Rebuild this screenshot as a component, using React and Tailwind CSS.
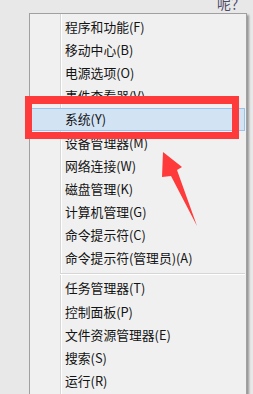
import React from "react";

const groupA = [
  "程序和功能(F)",
  "移动中心(B)",
  "电源选项(O)",
  "事件查看器(V)",
  "系统(Y)",
  "设备管理器(M)",
  "网络连接(W)",
  "磁盘管理(K)",
  "计算机管理(G)",
  "命令提示符(C)",
  "命令提示符(管理员)(A)",
];

const groupB = [
  "任务管理器(T)",
  "控制面板(P)",
  "文件资源管理器(E)",
  "搜索(S)",
  "运行(R)",
];

function Row({ label, active }) {
  return (
    <div
      className={`mx-[1px] h-[23.2px] flex items-center pl-[33px] border ${
        active ? "bg-[#d2e3f4] border-[#98c4ef]" : "border-transparent"
      }`}
    >
      <span className="text-[12.8px] text-[#141414] leading-none">{label}</span>
    </div>
  );
}

export default function App() {
  return (
    <div
      className="relative w-[253px] h-[394px] overflow-hidden bg-[#e8e8e8]"
      style={{ fontFamily: '"Noto Sans CJK SC", "Noto Sans", sans-serif' }}
    >
      <div className="h-[13px] overflow-hidden flex justify-end pr-[8px]">
        <span className="mt-[-6px] text-[14px] leading-[18px] text-[#4d4a66]">呢？</span>
      </div>

      <div className="ml-[29px] w-[218px] border border-[#a0a0a0] bg-[#f0f0f0] shadow-[2px_2px_2px_rgba(0,0,0,0.35)] pt-[1.4px] pb-[4px] bg-[linear-gradient(to_right,transparent_30px,#d6d6d6_30px,#d6d6d6_31px,#ffffff_31px,#ffffff_32px,transparent_32px)]">
        {groupA.map((l, i) => (
          <Row key={l} label={l} active={i === 4} />
        ))}
        <div className="h-[6.8px] flex items-center pl-[30px] pr-[1px]">
          <div className="w-full h-[2px] border-t border-[#d6d6d6] border-b-white border-b" />
        </div>
        {groupB.map((l) => (
          <Row key={l} label={l} />
        ))}
      </div>

      {/* red highlight frame */}
      <div className="absolute left-[25px] top-[96px] w-[214px] h-[43px] border-[7px] border-t-8 border-[#ff3a3a]" />

      {/* red arrow */}
      <svg className="absolute left-0 top-0" width="253" height="394" viewBox="0 0 253 394">
        <polygon
          points="163,152 182,167 177,170 197,226 171,176 162,177"
          fill="#ff3a3a"
        />
      </svg>
    </div>
  );
}
